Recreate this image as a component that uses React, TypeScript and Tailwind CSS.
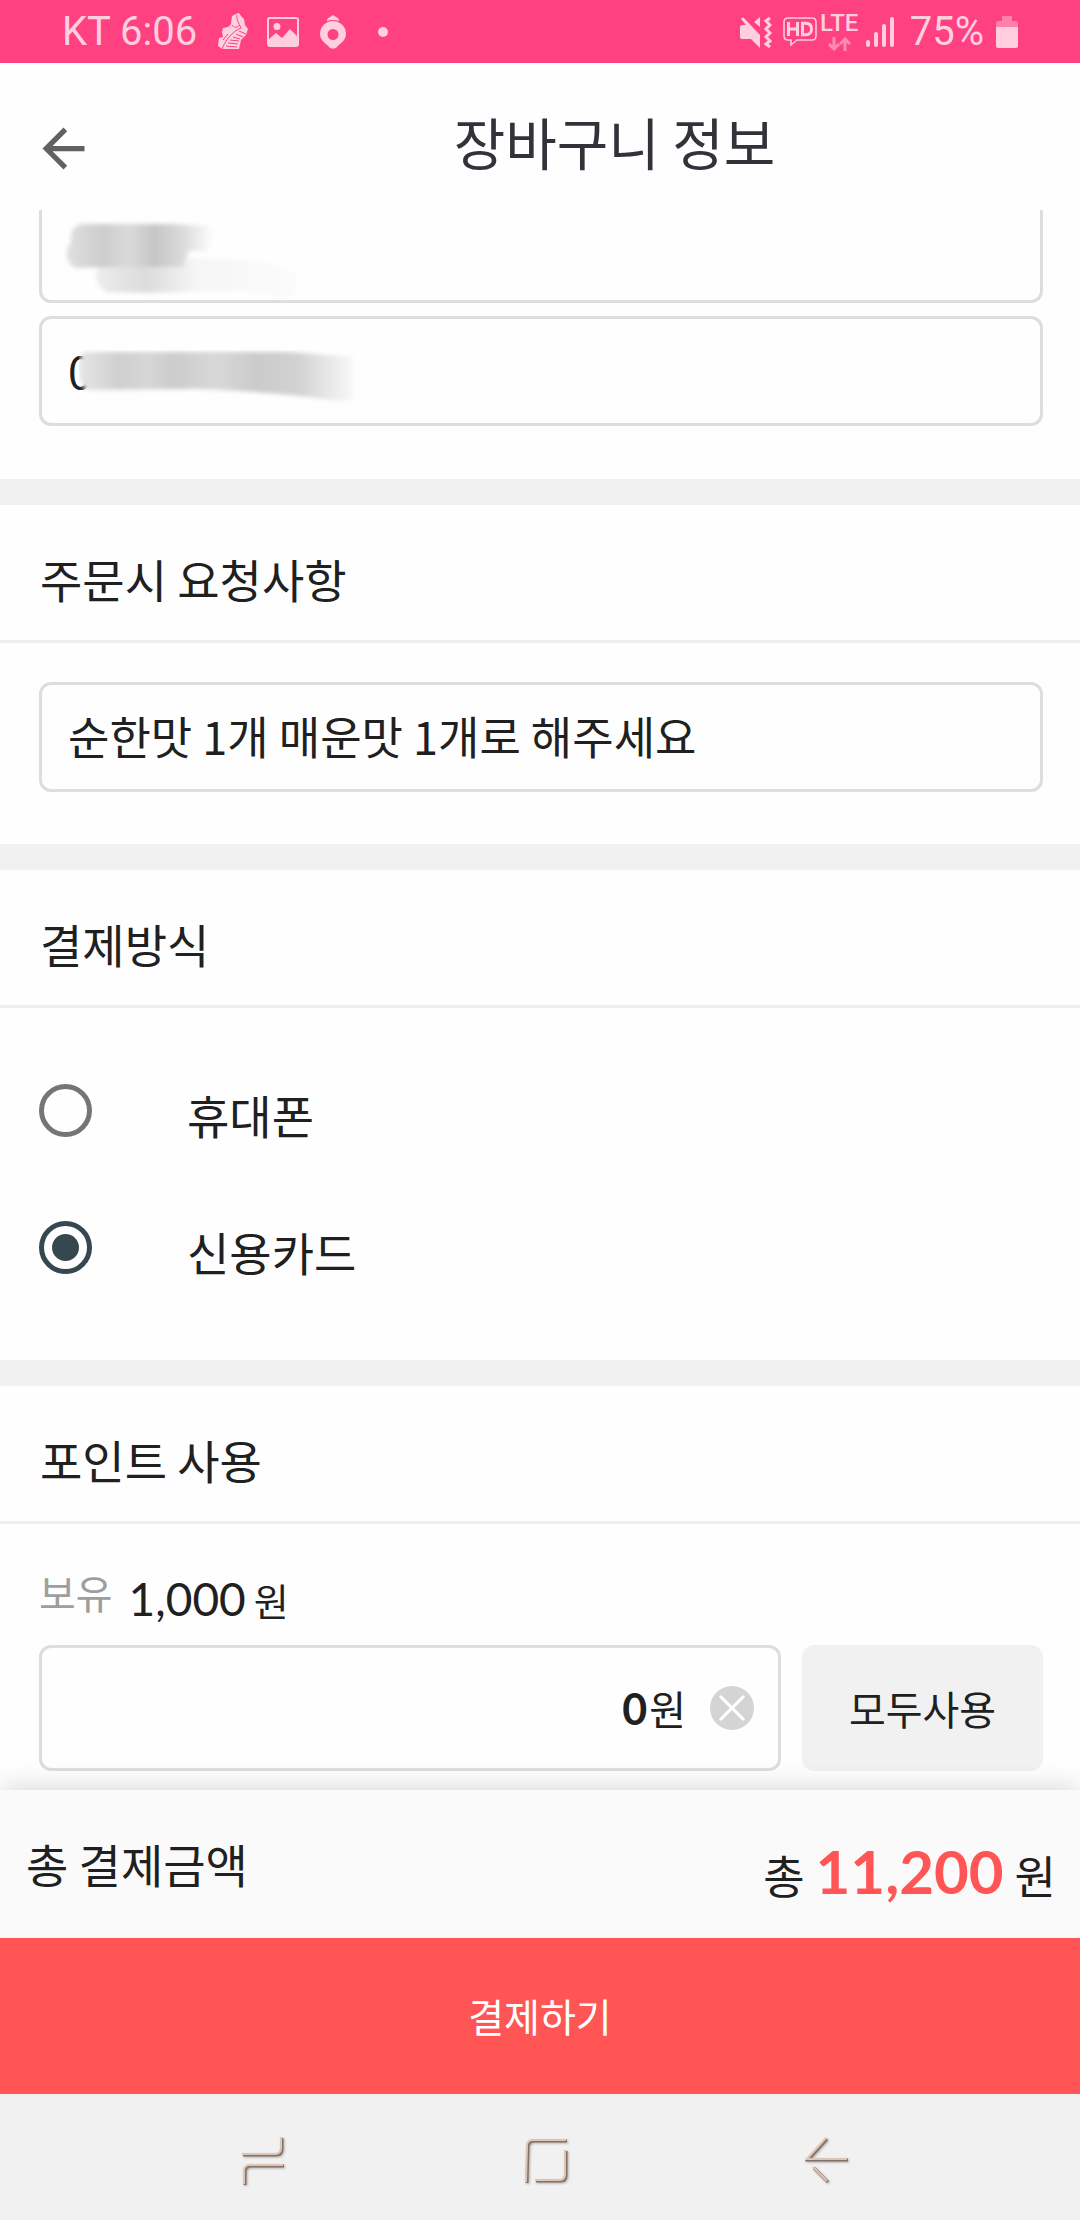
import { useState } from "react";
import type { ReactNode } from "react";

const fieldClass =
  "block w-full rounded-xl border-3 border-[#dddddd] bg-transparent px-[26px] pb-1 text-[45px] leading-none text-[#202020] outline-none";

const payMethods = [
  { id: "phone", label: "휴대폰" },
  { id: "card", label: "신용카드" },
];

function StatusBar() {
  return (
    <div className="flex h-[63px] shrink-0 items-center bg-[#ff4081] px-[62px] font-[Roboto] text-[40px] leading-none text-[#ffcfe0]">
      <span className="whitespace-nowrap">KT 6:06</span>

      {/* Running shoe */}
      <svg viewBox="0 0 30 38" className="ml-[21px] h-[38px] w-[30px]" fill="currentColor">
        <path d="M18 1l3-1 2 3 3 3 1 6 3 4-2 6-5 5-2 9H4l-4-3 1-8 4-1-1-5 1-4 5-1 3-3 1-8z" />
        <g stroke="#ff4081" strokeWidth="1" fill="none">
          <path d="M19 2c-1 5 2 8 4 13C16 18 9 24 4 36M14 12c2 3 5 3 8 0M10 21l-5 6" />
          <path d="M21 18l7 3M18 21l7 3M15 24l7 2M12 27l9 1M10 30l10 1M8 33l11 1" />
        </g>
      </svg>

      {/* Picture */}
      <svg viewBox="0 0 32 30" className="ml-[19px] h-[30px] w-8" fill="currentColor">
        <path
          fillRule="evenodd"
          d="M3 0h26a3 3 0 013 3v24a3 3 0 01-3 3H3a3 3 0 01-3-3V3a3 3 0 013-3zm-1 2v20l7-6 6 5 8-9 7 7V2zm8 4a3.500 3.500 0 110 7 3.500 3.500 0 010-7z"
        />
      </svg>

      {/* Pin */}
      <svg viewBox="0 0 26 34" className="ml-[21px] h-[34px] w-[26px]" fill="currentColor">
        <path d="M13 0l3 2q3 1 3 4-6-2-12 0 0-3 3-4z" />
        <path
          fillRule="evenodd"
          d="M13 6a13 13 0 0113 13c0 7-7 10-9 13-2 2-6 2-8 0-2-3-9-6-9-13A13 13 0 0113 6zm0 8a5.500 5.500 0 100 11 5.500 5.500 0 000-11z"
        />
      </svg>
      <span className="ml-8 size-[10px] rounded-full bg-current" />

      {/* Mute + vibrate */}
      <svg viewBox="0 0 32 32" className="ml-auto h-8 w-8" fill="currentColor">
        <path d="M0 11q0-2 2-2h4L1 3l2-2 17 18v13l-9-9H2q-2 0-2-2zM20 1v10l-6-5z" />
        <path
          d="M30 2l-4 3 4 4-4 4 4 4-4 4 4 4-4 3 4 3"
          fill="none"
          stroke="currentColor"
          strokeWidth="3"
        />
      </svg>

      {/* HD voice */}
      <svg viewBox="0 0 34 30" className="ml-[11px] h-[30px] w-[34px]" fill="none" stroke="currentColor">
        <path d="M5 1h24q4 0 4 4v14q0 4-4 4H14l-6 5v-5H5q-4 0-4-4V5q0-4 4-4z" strokeWidth="1.500" />
        <path d="M5.500 5v14M14.500 5v14M5.500 12h9M19.500 6.200h3q6 0 6 5.800t-6 5.800h-3z" strokeWidth="3" />
      </svg>

      <div className="ml-[3px] flex h-[38px] w-[39px] flex-col items-center">
        <span className="text-2xl leading-5 font-medium">LTE</span>
        <svg viewBox="0 0 24 14" className="mt-1 h-[14px] w-6 text-[#ff8cb4]" fill="none" stroke="currentColor" strokeWidth="3">
          <path d="M7 0v12M2 7l5 5 5-5M18 14V2M13 7l5-5 5 5" />
        </svg>
      </div>

      {/* Signal */}
      <svg viewBox="0 0 28 32" className="ml-[7px] h-8 w-7" stroke="currentColor" strokeWidth="4" strokeLinecap="round">
        <path d="M2 26v3M10 18v11M18 10v19M26 3v26" />
      </svg>
      <span className="ml-4">75%</span>

      {/* Battery */}
      <svg viewBox="0 0 22 32" className="ml-3 h-8 w-[22px]" fill="currentColor">
        <path d="M6 0h10v5h4q2 0 2 2v5H0V7q0-2 2-2h4z" opacity=".45" />
        <path d="M0 11h22v19q0 2-2 2H2q-2 0-2-2z" />
      </svg>
    </div>
  );
}

function SectionTitle({ children }: { children: ReactNode }) {
  return (
    <h2 className="flex h-[138px] items-center border-b-3 border-[#eeeeee] pt-[10px] pl-10 text-[46px] leading-none">
      {children}
    </h2>
  );
}

function Divider() {
  return <div className="h-[26px] shrink-0 bg-[#f1f1f1]" />;
}

// Bevelled outline icon of the system bar: dark edge below, light edge on top
function NavButton({ label, d }: { label: string; d: string }) {
  return (
    <button aria-label={label}>
      <svg
        viewBox="0 0 46 50"
        className="h-[50px] w-[46px] drop-shadow-[1px_1px_1px_rgba(90,70,70,0.4)]"
        fill="none"
      >
        <path d={d} stroke="#86706a" strokeWidth="3" transform="translate(1 1)" />
        <path d={d} stroke="#dcc6b6" strokeWidth="2" />
      </svg>
    </button>
  );
}

export default function App() {
  const [name, setName] = useState("");
  const [phone, setPhone] = useState("0");
  const [request, setRequest] = useState("순한맛 1개 매운맛 1개로 해주세요");
  const [method, setMethod] = useState("card");
  const [point, setPoint] = useState("0");

  return (
    <div className="flex min-h-screen flex-col bg-[#fefefe] font-['Noto_Sans_CJK_KR',sans-serif] text-[#202020]">
      <StatusBar />

      <header className="flex h-[147px] shrink-0 items-center">
        <button aria-label="뒤로" className="ml-8 pt-6 text-[#616161]">
          <svg viewBox="0 0 24 24" className="size-[63px]" fill="currentColor">
            <path d="M20 11H7.830l5.590-5.590L12 4l-8 8 8 8 1.410-1.410L7.830 13H20v-2z" />
          </svg>
        </button>
        <h1 className="ml-[54px] flex-1 pt-2 text-center text-[56px] leading-none text-[#32323a]">
          장바구니 정보
        </h1>
      </header>

      <main className="flex flex-col">
        {/* Orderer, scrolled partly under the header */}
        <section className="flex flex-col gap-[13px] pr-[37px] pb-[53px] pl-[39px]">
          <div className="relative">
            <input
              aria-label="이름"
              value={name}
              onChange={(e) => setName(e.target.value)}
              className={`${fieldClass} h-[93px] rounded-t-none border-t-0`}
            />
            <svg viewBox="0 0 240 84" className="pointer-events-none absolute top-2 left-6 h-[84px] w-60" aria-hidden="true">
              <defs>
                <linearGradient id="smudgeA">
                  <stop offset="0" stopColor="#e0e0e0" />
                  <stop offset=".25" stopColor="#cdcdcd" />
                  <stop offset=".42" stopColor="#dadada" />
                  <stop offset=".6" stopColor="#c6c6c6" />
                  <stop offset=".8" stopColor="#dcdcdc" />
                  <stop offset="1" stopColor="#fefefe" />
                </linearGradient>
                <linearGradient id="smudgeFade">
                  <stop offset="0" stopColor="#ececec" />
                  <stop offset=".25" stopColor="#dcdcdc" />
                  <stop offset=".5" stopColor="#f6f6f6" />
                  <stop offset="1" stopColor="#fbfbfb" />
                </linearGradient>
                <filter id="soft" x="-10%" y="-20%" width="120%" height="140%">
                  <feGaussianBlur stdDeviation="2" />
                </filter>
              </defs>
              <g filter="url(#soft)">
                <path d="M40 40h90q90 2 102 16 6 22-10 25-20-5-46-9-70 4-132 2-14-8-10-20z" fill="url(#smudgeFade)" />
                <path d="M20 6h90l36 2q10 12-2 25h-18l-6 16H50L12 50Q2 44 4 32l4-8Q6 8 20 6z" fill="url(#smudgeA)" />
              </g>
            </svg>
          </div>
          <div className="relative">
            <input
              aria-label="전화번호"
              value={phone}
              onChange={(e) => setPhone(e.target.value)}
              className={`${fieldClass} h-[110px]`}
            />
            <svg viewBox="0 0 320 60" className="pointer-events-none absolute top-[34px] left-10 h-[60px] w-80" aria-hidden="true">
              <defs>
                <linearGradient id="smudgeB">
                  <stop offset="0" stopColor="#e6e6e6" />
                  <stop offset=".15" stopColor="#cfcfcf" />
                  <stop offset=".25" stopColor="#d6d6d6" />
                  <stop offset=".35" stopColor="#cccccc" />
                  <stop offset=".5" stopColor="#d8d8d8" />
                  <stop offset=".65" stopColor="#cbcbcb" />
                  <stop offset=".8" stopColor="#d2d2d2" />
                  <stop offset="1" stopColor="#f8f8f8" />
                </linearGradient>
              </defs>
              <path d="M4 2h206l64 5v42q-10 4-28 0Q180 41 120 39L6 40Q-6 20 4 2z" fill="url(#smudgeB)" filter="url(#soft)" />
            </svg>
          </div>
        </section>

        <Divider />

        <section>
          <SectionTitle>주문시 요청사항</SectionTitle>
          <div className="pt-[39px] pr-[37px] pb-[52px] pl-[39px]">
            <input
              aria-label="주문시 요청사항"
              value={request}
              onChange={(e) => setRequest(e.target.value)}
              className={`${fieldClass} h-[110px]`}
            />
          </div>
        </section>

        <Divider />

        <section>
          <SectionTitle>결제방식</SectionTitle>
          <div className="flex flex-col gap-[84px] pt-[76px] pr-[37px] pb-[86px] pl-[39px]">
            {payMethods.map((m) => (
              <label key={m.id} className="flex h-[53px] items-center text-[46px] leading-none">
                <input
                  type="radio"
                  name="method"
                  checked={method === m.id}
                  onChange={() => setMethod(m.id)}
                  className="grid size-[53px] appearance-none place-items-center rounded-full border-5 border-[#757575] before:size-[27px] before:rounded-full checked:border-[#37474f] checked:before:bg-[#37474f]"
                />
                <span className="mt-[6px] ml-[95px]">{m.label}</span>
              </label>
            ))}
          </div>
        </section>

        <Divider />

        <section>
          <SectionTitle>포인트 사용</SectionTitle>
          <div className="pt-[45px] pr-[37px] pb-[19px] pl-[39px]">
            <p className="flex h-[76px] items-start">
              <span className="text-[40px] leading-[46px] text-[#9e9e9e]">보유</span>
              <span className="ml-4 font-[Lato] text-[46px] leading-[60px]">1,000</span>
              <span className="ml-2 text-[38px] leading-[62px]">원</span>
            </p>
            <div className="flex h-[126px] gap-[21px]">
              <div className="flex flex-1 items-center rounded-xl border-3 border-[#dddddd] pr-6">
                <input
                  aria-label="사용할 포인트"
                  value={point}
                  onChange={(e) => setPoint(e.target.value)}
                  className="min-w-0 flex-1 bg-transparent text-right font-[Lato] text-[43px] leading-none font-bold outline-none"
                />
                <span className="ml-[2px] text-[40px] leading-none">원</span>
                <button
                  aria-label="지우기"
                  onClick={() => setPoint("0")}
                  className="ml-6 grid size-11 place-items-center rounded-full bg-[#d4d4d4] text-white"
                >
                  <svg viewBox="0 0 26 26" className="size-[26px]" stroke="currentColor" strokeWidth="3">
                    <path d="M1 1l24 24M25 1L1 25" />
                  </svg>
                </button>
              </div>
              <button
                onClick={() => setPoint("1000")}
                className="w-[241px] rounded-xl bg-[#f1f1f1] text-[40px] leading-none"
              >
                모두사용
              </button>
            </div>
          </div>
        </section>
      </main>

      <footer className="mt-auto shrink-0">
        <div className="flex h-[148px] items-center justify-between bg-[#fafafa] pr-6 pl-[26px] shadow-[0_0_26px_rgba(0,0,0,0.18)]">
          <span className="pb-[2px] text-[46px] leading-none">총 결제금액</span>
          <p className="flex items-baseline gap-[11px] pt-[14px] text-[45px] leading-none">
            총<strong className="font-[Lato] text-[60px] leading-none font-bold text-[#ff5555]">11,200</strong>원
          </p>
        </div>
        <button className="relative block h-[156px] w-full bg-[#ff5555] pb-[2px] text-[39px] leading-none text-white">
          결제하기
        </button>

        {/* System navigation */}
        <nav className="flex h-[126px] items-center justify-center bg-[#f1f1f1] pt-2 pl-3">
          <div className="flex w-[610px] justify-between">
            <NavButton label="최근 앱" d="M1 18h33q6 0 6-6V1M42 29H9q-6 0-6 6v13" />
            <NavButton label="홈" d="M43 4H10q-6 0-6 6L3 46M12 44h25q5 0 5-6V14" />
            <NavButton label="뒤로 가기" d="M21 2L2 23h40M8 31l14 14" />
          </div>
        </nav>
      </footer>
    </div>
  );
}
